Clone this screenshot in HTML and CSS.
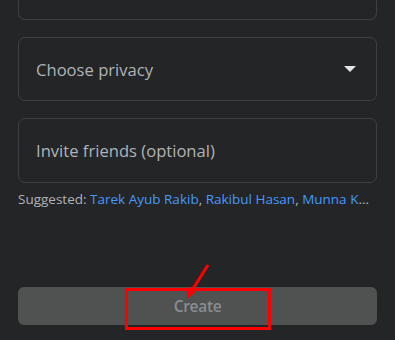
FILE: index.html
```html
<!DOCTYPE html>
<html lang="en">
<head>
    <meta charset="UTF-8">
    <meta name="viewport" content="width=device-width, initial-scale=1.0">
    <title>Create group</title>
    <link rel="stylesheet" href="styles.css">
</head>
<body>
    <div class="form">
        <div class="field field-cut"></div>

        <div class="field select">
            <span class="placeholder">Choose privacy</span>
            <span class="caret"></span>
        </div>

        <div class="field">
            <span class="placeholder">Invite friends (optional)</span>
        </div>

        <p class="suggested">Suggested: <a href="#">Tarek Ayub Rakib</a>, <a href="#">Rakibul Hasan</a>, <a href="#">Munna Khan</a></p>

        <div class="spacer"></div>

        <div class="footer">
            <button class="create" disabled>Create</button>
            <div class="mark"></div>
            <svg class="arrow" width="40" height="40" viewBox="0 0 40 40">
                <line x1="26" y1="2" x2="9" y2="29" stroke="#ff0000" stroke-width="3" />
                <polygon points="5,36 6,24 14,29" fill="#ff0000" />
            </svg>
        </div>
    </div>
</body>
</html>
```

FILE: styles.css
```css
body { margin: 0; background: #242526; font-family: "Open Sans", "Noto Sans", sans-serif; height: 340px; overflow: hidden; }
.form { padding: 0 18px; display: flex; flex-direction: column; height: 340px; box-sizing: border-box; }
.field { height: 64px; border: 1px solid #3e4042; border-radius: 7px; box-sizing: border-box; display: flex; align-items: center; padding: 0 20px 0 17px; margin-bottom: 17px; }
.field-cut { height: 20px; border-top: none; border-radius: 0 0 7px 7px; }
.field:nth-child(3) { height: 65px; margin-bottom: 0; }
.placeholder { color: #b0b3b8; font-size: 16.6px; }
.select { justify-content: space-between; }
.caret { width: 0; height: 0; border-left: 6px solid transparent; border-right: 6px solid transparent; border-top: 6px solid #e4e6eb; }
.suggested { margin: 7px 0 0; color: #b0b3b8; font-size: 13.5px; white-space: nowrap; overflow: hidden; text-overflow: ellipsis; }
.suggested a { color: #4599ff; text-decoration: none; }
.spacer { flex: 1; }
.footer { position: relative; margin-bottom: 15px; }
.create { width: 100%; height: 38px; border: none; border-radius: 6px; background: #505151; color: #8a8d91; font-family: inherit; font-size: 15.5px; font-weight: 600; letter-spacing: -0.3px; }
.mark { position: absolute; left: 107px; top: 1px; width: 146px; height: 42px; border: 3px solid #ff0000; box-sizing: border-box; }
.arrow { position: absolute; left: 164px; top: -24px; }
```
